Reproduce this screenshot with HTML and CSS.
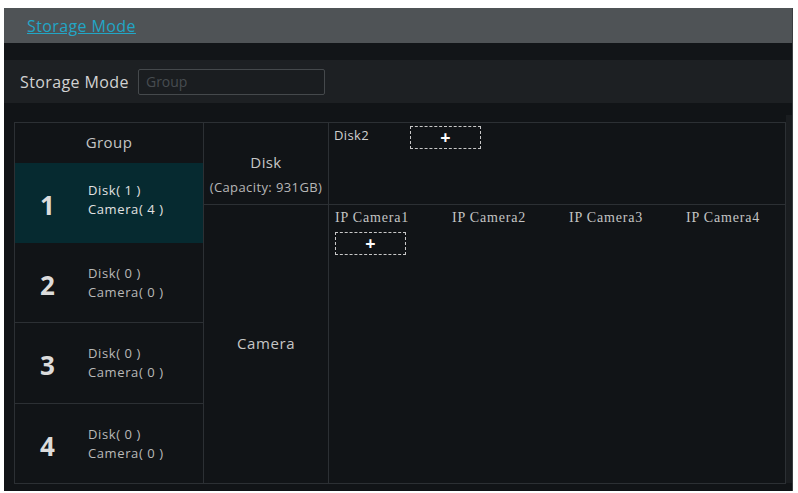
FILE: index.html
```html
<!DOCTYPE html>
<html>
<head>
<meta charset="utf-8">
<link rel="stylesheet" href="styles.css">
</head>
<body>
<div class="window">
  <div class="titlebar"><a class="tab">Storage Mode</a></div>
  <div class="strip"></div>
  <div class="toolbar">
    <span class="label">Storage Mode</span>
    <div class="select">Group</div>
  </div>
  <div class="table">
    <div class="col groups">
      <div class="ghead">Group</div>
      <div class="grow selected"><span class="num">1</span><span class="info">Disk( 1 )<br>Camera( 4 )</span></div>
      <div class="grow"><span class="num">2</span><span class="info dim">Disk( 0 )<br>Camera( 0 )</span></div>
      <div class="grow tall"><span class="num">3</span><span class="info dim">Disk( 0 )<br>Camera( 0 )</span></div>
      <div class="grow tall last"><span class="num">4</span><span class="info dim">Disk( 0 )<br>Camera( 0 )</span></div>
    </div>
    <div class="col kinds">
      <div class="kind disk"><span class="kname">Disk</span><span class="cap">(Capacity: 931GB)</span></div>
      <div class="kind camk"><span class="kname">Camera</span></div>
    </div>
    <div class="col content">
      <div class="diskarea">
        <span class="item">Disk2</span>
        <span class="addbox addbox-disk">+</span>
      </div>
      <div class="camarea">
        <div class="cams">
          <span class="cam">IP Camera1</span>
          <span class="cam">IP Camera2</span>
          <span class="cam">IP Camera3</span>
          <span class="cam">IP Camera4</span>
        </div>
        <span class="addbox">+</span>
      </div>
    </div>
  </div>
  <div class="scrollstripe"></div>
</div>
</body>
</html>
```
FILE: styles.css
```css
* { box-sizing: border-box; }
html, body { margin: 0; padding: 0; }
body {
  background: #ffffff;
  width: 798px;
  height: 493px;
  overflow: hidden;
  font-family: "Open Sans", "Noto Sans", sans-serif;
}
.window {
  margin: 8px 5px 0 4px;
  height: 483px;
  background: #111417;
  border-right: 1px solid #3a3d40;
  display: flex;
  flex-direction: column;
  position: relative;
}
.titlebar {
  height: 35px;
  background: #4f5356;
  display: flex;
  align-items: center;
  padding-left: 23px;
}
.tab {
  color: #22a6c6;
  font-size: 16px;
  letter-spacing: 0.4px;
  text-decoration: underline;
}
.strip {
  height: 17px;
  background: #121518;
}
.toolbar {
  height: 43px;
  background: #1d2023;
  display: flex;
  align-items: center;
  padding-left: 16px;
  gap: 9px;
}
.label {
  color: #d2d2d2;
  font-size: 16px;
  letter-spacing: 0.4px;
}
.select {
  width: 187px;
  height: 26px;
  border: 1px solid #45494c;
  border-radius: 2px;
  background: #1a1d20;
  color: #474c50;
  font-size: 14px;
  padding-left: 7px;
  line-height: 24px;
}
.table {
  margin: 19px 6px 0 10px;
  height: 362px;
  border: 1px solid #2c3034;
  display: flex;
  color: #c8c8c8;
}
.col { display: flex; flex-direction: column; }
.groups { width: 189px; border-right: 1px solid #2c3034; }
.ghead {
  height: 40px;
  display: flex;
  align-items: center;
  justify-content: center;
  font-size: 15px;
  letter-spacing: 0.4px;
  color: #c4c4c4;
  padding-bottom: 3px;
}
.grow {
  height: 80px;
  display: flex;
  align-items: center;
  padding-left: 25px;
  border-bottom: 1px solid #2c3034;
}
.grow.tall { height: 81px; }
.grow.last { border-bottom: none; flex: 1; }
.grow.selected { background: #062a30; border-bottom: none; }
.num {
  width: 48px;
  font-size: 26px;
  font-weight: 700;
  color: #dcdcdc;
  text-align: left;
  padding-top: 4px;
}
.info {
  font-size: 13px;
  letter-spacing: 0.6px;
  line-height: 19px;
  color: #e2e2e2;
}
.grow.selected .info { margin-top: -6px; }
.info.dim { color: #b9b9b9; }
.kinds { width: 125px; border-right: 1px solid #2c3034; }
.kind {
  display: flex;
  flex-direction: column;
  align-items: center;
}
.disk {
  height: 82px;
  border-bottom: 1px solid #2c3034;
  padding-top: 27px;
}
.kname { font-size: 15px; color: #c6c6c6; line-height: 24px; letter-spacing: 0.4px; }
.cap { font-size: 13px; color: #b7b7b7; line-height: 26px; letter-spacing: 0.4px; white-space: nowrap; }
.camk { flex: 1; justify-content: center; padding-bottom: 2px; }
.camk .kname { font-size: 15px; letter-spacing: 0.6px; }
.content { flex: 1; }
.diskarea {
  height: 82px;
  border-bottom: 1px solid #2c3034;
  display: flex;
  align-items: flex-start;
  padding: 4px 0 0 5px;
}
.item {
  font-size: 13px;
  letter-spacing: 0.4px;
  color: #cfcfcf;
  line-height: 16px;
  width: 76px;
}
.addbox {
  width: 71px;
  height: 23px;
  border: 1px dashed #c8c8c8;
  color: #ffffff;
  font-weight: 700;
  font-size: 18px;
  line-height: 19px;
  display: flex;
  align-items: center;
  justify-content: center;
}
.addbox-disk { margin-top: -1px; }
.camarea {
  flex: 1;
  padding: 3px 0 0 6px;
  display: flex;
  flex-direction: column;
  align-items: flex-start;
  gap: 5px;
}
.cams { display: flex; }
.cams .cam {
  flex: none;
  width: 117px;
  font-family: "Liberation Serif", "DejaVu Serif", serif;
  font-size: 14px;
  letter-spacing: 0.8px;
  color: #c4c4c4;
  line-height: 19px;
}
.cams .cam:last-child { width: auto; }
.scrollstripe {
  position: absolute;
  right: 0;
  top: 107px;
  bottom: 8px;
  width: 6px;
  background: #1a1d20;
}
```
